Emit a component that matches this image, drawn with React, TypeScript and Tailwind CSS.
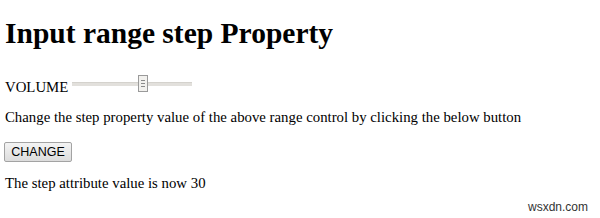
import React from 'react';

function OldSlider() {
  return (
    <div className="relative w-[120px] h-[17px] flex items-center">
      {/* track */}
      <div className="w-full h-[4px] bg-[#e2e0dc] border-t border-[#d4d2cd]" />
      {/* thumb */}
      <div className="absolute left-[66px] top-0 w-[10px] h-[17px] bg-[#f2f1ee] border border-[#9a9a9a] flex flex-col items-center justify-center gap-[2px]">
        <span className="block w-[4px] h-px bg-[#8a8a8a]" />
        <span className="block w-[4px] h-px bg-[#8a8a8a]" />
        <span className="block w-[4px] h-px bg-[#8a8a8a]" />
      </div>
    </div>
  );
}

export default function App() {
  return (
    <div className="relative w-[600px] h-[218px] bg-white text-black font-['Liberation_Serif',serif] pl-[5px] overflow-hidden">
      <h1 className="pt-[18px] text-[29.5px] leading-[30px] font-bold">Input range step Property</h1>

      <div className="mt-[26px] flex items-start h-[20px]">
        <span className="text-[14.8px] leading-[20px] mt-[3px]">VOLUME</span>
        <div className="ml-[4px] mt-[1px]">
          <OldSlider />
        </div>
      </div>

      <p className="mt-[13px] text-[14.8px] leading-[20px]">
        Change the step property value of the above range control by clicking the below button
      </p>

      <button className="mt-[15px] -ml-[1px] w-[68px] h-[20px] border border-[#a3a3a3] rounded-[2px] bg-gradient-to-b from-[#f4f4f4] to-[#dcdcdc] font-['Liberation_Sans',sans-serif] text-[12.5px] leading-[18px] text-black">
        CHANGE
      </button>

      <p className="mt-[10px] text-[14.8px] leading-[20px]">The step attribute value is now 30</p>

      <span className="absolute right-[12px] bottom-[4px] font-['Liberation_Sans',sans-serif] text-[12px] leading-[14px] text-[#333]">
        wsxdn.com
      </span>
    </div>
  );
}
